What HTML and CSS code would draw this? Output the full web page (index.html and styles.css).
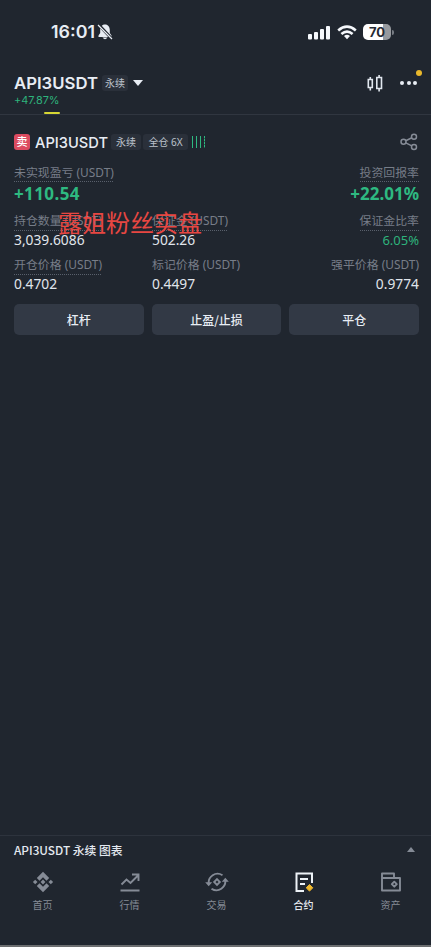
FILE: index.html
```html
<!DOCTYPE html>
<html lang="zh-CN">
<head>
<meta charset="utf-8">
<meta name="viewport" content="width=device-width, initial-scale=1">
<title>API3USDT 永续</title>
<link rel="stylesheet" href="styles.css">
</head>
<body>
<div class="app">
  <div class="status">
    <span class="time"><svg class="fit" width="45" height="20"><text x="0" y="16" textLength="44" lengthAdjust="spacingAndGlyphs">16:01</text></svg></span>
    <svg class="bell" width="16" height="16" viewBox="0 0 16 16"><path fill="#e8edf4" d="M8 .5C4.800.5 3.200 3 3.200 6v3L1.500 11.600V13h13v-1.400L12.800 9V6C12.800 3 11.200.5 8 .5zM5.500 13.500h5q-2.500 3.500-5 0z"/><path d="M2 1l12.500 13.500" stroke="#20262f" stroke-width="3"/><path d="M1 1l14 14" stroke="#e8edf4" stroke-width="1.300"/></svg>
    <svg class="signal" width="22" height="15" viewBox="0 0 22 15" fill="#f5f8fc"><rect y="9" width="4" height="5.500" rx="1"/><rect x="6" y="7" width="4" height="7.500" rx="1"/><rect x="12" y="4" width="4" height="10.500" rx="1"/><rect x="18" y="1" width="4" height="13.500" rx="1"/></svg>
    <svg class="wifi" width="20" height="15" viewBox="0 0 20 15" fill="none" stroke="#f5f8fc" stroke-width="2.600"><path d="M1.200 5.500q8.800-7.600 17.600 0M4.400 9q5.600-4.900 11.200 0"/><path d="M7 11q3-2.500 6 0l-3 3.300z" fill="#f5f8fc" stroke="none"/></svg>
    <div class="battery">70</div>
  </div>
  <header class="header">
    <div class="pair">
      <h1><svg class="fit" width="84" height="22"><text x="0" y="17" textLength="84" lengthAdjust="spacingAndGlyphs">API3USDT</text></svg></h1>
      <span class="tag">永续</span><i class="down"></i>
      <svg class="candles" width="16" height="17" viewBox="0 0 16 17" fill="none" stroke="#e2e8f0" stroke-width="1.600"><path d="M1.300 4.500h4v8h-4zM3.300 2v2.500M3.300 12.500v3M9.800 2.500h4.700v11H9.800zM12.100 0v2.500M12.100 13.500v3"/></svg>
      <div class="more"><i></i><i></i><i></i><b></b></div>
    </div>
    <div class="change">+47.87%</div>
    <div class="indicator"></div>
  </header>
  <main class="position">
    <div class="title">
      <span class="sell">卖</span>
      <h2><svg class="fit" width="74" height="20"><text x="0" y="15.500" textLength="73" lengthAdjust="spacingAndGlyphs">API3USDT</text></svg></h2>
      <span class="tag perp">永续</span><span class="tag cross">全仓 6X</span>
      <div class="risk"><i></i><i></i><i></i><i></i></div>
      <svg class="share" width="18" height="18" viewBox="0 0 18 18" fill="none" stroke="#858b96" stroke-width="1.500"><circle cx="3.500" cy="8.800" r="2.500"/><circle cx="14" cy="3.700" r="2.500"/><circle cx="14" cy="14" r="2.500"/><path d="M5.800 7.700l6-2.900M5.800 9.900l6 3"/></svg>
    </div>
    <div class="stats top">
      <div><span class="label dotted">未实现盈亏 (USDT)</span><strong class="pnl">+110.54</strong></div>
      <div class="right"><span class="label dotted">投资回报率</span><strong>+22.01%</strong></div>
    </div>
    <div class="stats three mid">
      <div><span class="label dotted">持仓数量 (USDT)</span><span class="value">3,039.6086</span></div>
      <div><span class="label dotted">保证金 (USDT)</span><span class="value">502.26</span></div>
      <div class="right"><span class="label dotted">保证金比率</span><span class="value green">6.05%</span></div>
      <div class="watermark">露姐粉丝实盘</div>
    </div>
    <div class="stats three low">
      <div><span class="label dotted">开仓价格 (USDT)</span><span class="value">0.4702</span></div>
      <div><span class="label">标记价格 (USDT)</span><span class="value">0.4497</span></div>
      <div class="right"><span class="label">强平价格 (USDT)</span><span class="value">0.9774</span></div>
    </div>
    <div class="actions"><button>杠杆</button><button>止盈/止损</button><button>平仓</button></div>
  </main>
  <section class="chart"><span>API3USDT 永续 图表</span><i></i></section>
  <nav class="nav">
    <a><svg viewBox="0 0 22 22" fill="#858b96"><path d="M11 .8l6.200 6.200-2.700 2.700L11 6.200 7.500 9.700 4.800 7zM11 21.200l6.200-6.200-2.700-2.700-3.500 3.500-3.500-3.500L4.800 15zM11 8.600l2.400 2.400-2.400 2.400L8.600 11zM3.200 8.700L5.500 11l-2.300 2.300L.9 11zM18.800 8.700l2.300 2.300-2.300 2.300-2.300-2.300z"/></svg><span>首页</span></a>
    <a><svg viewBox="0 0 22 22" fill="none" stroke="#858b96" stroke-width="1.900"><path d="M1.500 19.500h19M2.500 13.500l5-5 4 3.500 7.500-7.500M13 3.500h6.500V10"/></svg><span>行情</span></a>
    <a><svg class="wide" viewBox="0 0 26 22" fill="none" stroke="#858b96" stroke-width="1.900"><path d="M4.700 12.500C4 6 11.500-.3 18.500 4.300M21.300 9.500C22 16 14.500 22.300 7.500 17.700"/><path d="M1.200 11.300h7l-3.500 4zM17.800 10.700h7l-3.500-4z" fill="#858b96" stroke="none"/><path d="M13 8.200l2.800 2.800-2.800 2.800-2.800-2.800z"/></svg><span>交易</span></a>
    <a class="active"><svg viewBox="0 0 22 22" fill="none" stroke="#edf2f7" stroke-width="2"><path d="M11 20H3.500V2.500H19V12M7 8h8M7 13h5"/><path d="M16.500 13.500l3.300 3.300-3.300 3.300-3.300-3.300z" fill="#edb72d" stroke="#edb72d" stroke-width="1"/></svg><span>合约</span></a>
    <a><svg viewBox="0 0 22 22" fill="none" stroke="#858b96" stroke-width="1.900" stroke-linejoin="round"><path d="M2 7V2.500h12V7M2 7h18v12.500H2zM14.300 10.700l2.500 2.500-2.500 2.500-2.500-2.500z"/></svg><span>资产</span></a>
  </nav>
</div>
</body>
</html>
```
FILE: styles.css
```css
* { box-sizing: border-box; }
body { margin: 0; background: #20262f; color: #e4e9f0; font-family: "Noto Sans", "Noto Sans CJK SC", sans-serif; }
h1, h2 { margin: 0; font-size: 0; }
svg { display: block; flex-shrink: 0; }
.fit { fill: #e8edf4; overflow: visible; }
.app { height: 947px; display: flex; flex-direction: column; border-bottom: 2px solid #6c6e70; }
.status { height: 64px; padding: 0 38px 0 51px; display: flex; align-items: center; }
.time { font: 600 17px Inter, sans-serif; }
.bell { margin-left: 1px; }
.signal { margin-left: auto; }
.wifi { margin-left: 7px; }
.battery { position: relative; width: 28px; height: 16px; margin: 0 2px 0 6px; border-radius: 5px; background: linear-gradient(90deg, #fff 20px, #96999e 20px); color: #252a32; text-align: center; font: 700 13px/16px Inter, sans-serif; }
.battery::after { content: ""; position: absolute; right: -3px; top: 6px; width: 2px; height: 5px; border-radius: 0 2px 2px 0; background: #777c84; }
.header { height: 51px; padding: 8px 14px 0; border-bottom: 1px solid #303640; }
.pair { display: flex; align-items: center; height: 22px; }
.pair h1 text { font: 600 16.500px Inter, sans-serif; }
.tag { display: flex; align-items: center; justify-content: center; height: 16px; border-radius: 3px; background: #2a303a; color: #bdc3cc; font-size: 10px; line-height: 14px; padding-bottom: 1px; white-space: nowrap; }
.pair .tag { width: 26px; margin-left: 4px; }
.down { margin-left: 5px; border: 5px solid transparent; border-top: 6px solid #e8edf4; border-bottom: 0; }
.candles { margin-left: auto; margin-right: 17px; }
.more { position: relative; width: 17px; display: flex; justify-content: space-between; }
.more i { width: 4px; height: 4px; border-radius: 50%; background: #e8edf4; }
.more b { position: absolute; right: -5px; top: -11px; width: 6px; height: 6px; border-radius: 50%; background: #e9b82c; }
.change { height: 12px; font: 10.900px/13px Inter, sans-serif; color: #2eb37c; }
.indicator { width: 16px; height: 2px; margin: 6px 0 0 30px; background: #d6d634; border-radius: 1px; }
.position { flex: 1; padding: 17px 12px 0 14px; }
.title { height: 20px; display: flex; align-items: center; }
.sell { width: 16px; height: 16px; border-radius: 3px; background: #dc4b60; color: #fff; font: 500 11px/15px "Noto Sans CJK SC", sans-serif; text-align: center; }
.title h2 { margin-left: 5px; }
.title h2 text { font: 500 15px Inter, sans-serif; }
.perp { width: 30px; margin-left: 2px; }
.cross { width: 45px; margin-left: 2px; }
.risk { display: flex; gap: 3px; margin-left: 4px; }
.risk i { width: 1px; height: 12px; background: #2eb981; }
.risk i:last-child { background: repeating-linear-gradient(#2eb981 0 2px, #28654f 2px 3px); }
.share { margin: 0 1px 0 auto; }
.stats { position: relative; display: flex; justify-content: space-between; }
.stats > div:not(.watermark) { display: flex; flex-direction: column; align-items: flex-start; }
.stats > .right:not(.watermark) { align-items: flex-end; }
.top { margin-top: 12px; height: 49px; }
.three { display: grid; grid-template-columns: 138px 138px 1fr; }
.mid { height: 44px; }
.low { height: 46px; }
.label { height: 18px; color: #777d88; font: 11.900px/14px "Noto Sans", "Noto Sans CJK SC", sans-serif; white-space: nowrap; }
.top .label { line-height: 16px; }
.dotted { background: repeating-linear-gradient(90deg, #59606c 0 1px, transparent 1px 2px) bottom / 100% 1px no-repeat; }
.top strong { font: 700 17px/24px "Noto Sans", sans-serif; color: #2eb981; }
.top .pnl { letter-spacing: .4px; }
.value { font: 13.800px/18px "Noto Sans", sans-serif; color: #e0e5ec; }
.value.green { color: #2eb37c; font-size: 13px; }
.watermark { position: absolute; left: 44px; top: -8px; font: 24px/34px "Noto Sans CJK SC", sans-serif; color: #e74742; white-space: nowrap; }
.actions { display: grid; grid-template-columns: repeat(3, 1fr); gap: 8px; margin-top: 1px; }
button { height: 31px; padding: 0; border: 0; border-radius: 5px; background: #323945; color: #e8edf4; font: 500 12px "Noto Sans CJK SC", sans-serif; }
.chart { height: 30px; border-top: 1px solid #2d333d; padding: 0 16px 3px 14px; display: flex; align-items: center; justify-content: space-between; font: 500 11.800px "Noto Sans CJK SC", sans-serif; }
.chart i { border: 4px solid transparent; border-top: 0; border-bottom: 5px solid #858b96; }
.nav { height: 80px; display: grid; grid-template-columns: repeat(5, 87px); margin-left: -1px; padding-top: 6px; }
.nav a { display: flex; flex-direction: column; align-items: center; color: #858b96; font-size: 10px; line-height: 14px; }
.nav svg { width: 22px; height: 22px; margin-bottom: 5px; }
.nav .wide { width: 26px; }
.nav .active { color: #e8edf4; font-weight: 500; }
```
